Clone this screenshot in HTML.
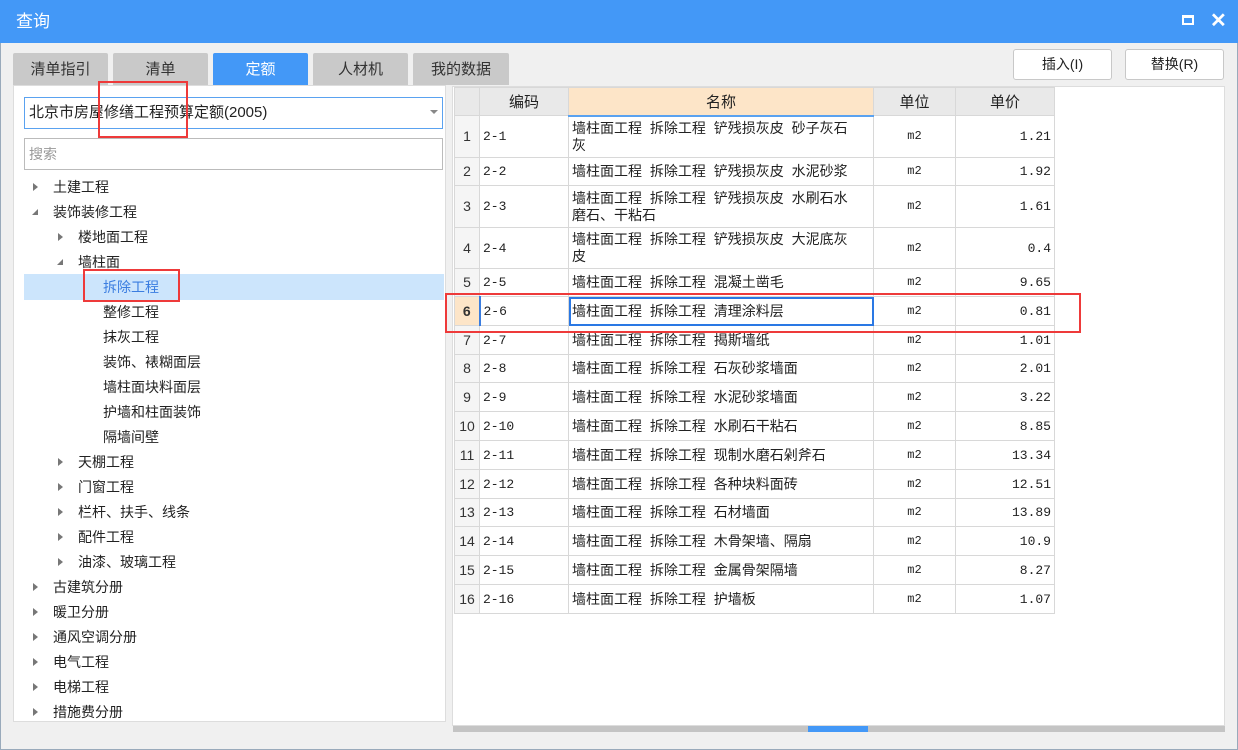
<!DOCTYPE html>
<html><head><meta charset="utf-8"><style>
*{margin:0;padding:0;box-sizing:border-box}
body{width:1238px;height:750px;overflow:hidden;background:#f0f0f0;font-family:"Liberation Sans","Noto Sans CJK SC",sans-serif;font-size:14px;color:#222;position:relative}
.abs{position:absolute}
.title{left:0;top:0;width:1238px;height:43px;background:#4398f7;color:#fff;font-size:17px;line-height:43px;padding-left:16px}
.win{left:0;top:43px;width:1238px;height:707px;border:1px solid #9ab;border-top:none}
.tab{top:53px;height:32px;width:95px;background:#c9c9c9;text-align:center;line-height:34px;font-size:15px;color:#333;border-radius:2px 2px 0 0}
.tab.on{background:#4398f7;color:#fff}
.btn{top:49px;height:31px;width:99px;background:#fff;border:1px solid #c8c8c8;border-radius:3px;text-align:center;line-height:29px;font-size:14px}
.left{left:13px;top:85px;width:433px;height:637px;background:#fff;border:1px solid #ddd}
.combo{left:24px;top:97px;width:419px;height:32px;border:1px solid #5aa2f0;background:#fff;line-height:30px;padding-left:4px;font-size:15px}
.search{left:24px;top:138px;width:419px;height:32px;border:1px solid #bbb;background:#fff;line-height:30px;padding-left:4px;color:#999;font-size:14px}
.ti{height:25px;line-height:25px;font-size:14px;position:absolute}
.arr{position:absolute;width:0;height:0;border-top:4px solid transparent;border-bottom:4px solid transparent;border-left:5px solid #777}
.arrd{position:absolute;width:0;height:0;border-left:6px solid transparent;border-bottom:6px solid #777}
.right{left:452px;top:86px;width:773px;height:640px;background:#fff;border:1px solid #ddd}
table{position:absolute;left:454px;top:87px;border-collapse:collapse;font-size:14px;background:#fff}
td{border:1px solid #d8d8d8;padding:0 3px;vertical-align:middle;line-height:17px}
th{border:1px solid #d8d8d8;background:#e9e9e9;font-weight:normal;font-size:15px;height:28px}
td.n{width:25px;background:#f5f5f5;text-align:center;font-family:"Liberation Sans Narrow","Liberation Sans",sans-serif;color:#333}
td.c{width:89px;font-family:"Liberation Mono",monospace;font-size:13px}
td.nm{width:305px;word-spacing:4px;white-space:nowrap}
td.u{width:82px;text-align:center;font-family:"Liberation Mono",monospace;font-size:12px}
td.p{width:99px;text-align:right;font-family:"Liberation Mono",monospace;font-size:13px}
.red{position:absolute;border:2px solid #ee3a3a}
</style></head><body>
<div class="abs title">查询</div>
<div class="abs" style="left:1182px;top:15px;width:12px;height:10px;border:2px solid #fff;border-top-width:3px"></div>
<div class="abs" style="left:1210px;top:8px;color:#fff;font-size:20px;font-weight:bold">✕</div>
<div class="abs win"></div>
<div class="abs tab" style="left:13px">清单指引</div>
<div class="abs tab" style="left:113px">清单</div>
<div class="abs tab on" style="left:213px">定额</div>
<div class="abs tab" style="left:313px">人材机</div>
<div class="abs tab" style="left:413px;width:96px">我的数据</div>
<div class="abs btn" style="left:1013px">插入(I)</div>
<div class="abs btn" style="left:1125px">替换(R)</div>
<div class="abs left"></div>
<div class="abs combo">北京市房屋修缮工程预算定额(2005)</div>
<div class="abs" style="left:430px;top:110px;border-left:4px solid transparent;border-right:4px solid transparent;border-top:4px solid #888"></div>
<div class="abs search">搜索</div>
<div class="abs" style="left:24px;top:274px;width:420px;height:26px;background:#cce5fc"></div>

<div class="arr" style="left:33px;top:183px"></div><div class="ti" style="left:53px;top:175px">土建工程</div>
<div class="arrd" style="left:32px;top:209px"></div><div class="ti" style="left:53px;top:200px">装饰装修工程</div>
<div class="arr" style="left:58px;top:233px"></div><div class="ti" style="left:78px;top:225px">楼地面工程</div>
<div class="arrd" style="left:57px;top:259px"></div><div class="ti" style="left:78px;top:250px">墙柱面</div>
<div class="ti" style="left:103px;top:275px;color:#3a7de0">拆除工程</div>
<div class="ti" style="left:103px;top:300px">整修工程</div>
<div class="ti" style="left:103px;top:325px">抹灰工程</div>
<div class="ti" style="left:103px;top:350px">装饰、裱糊面层</div>
<div class="ti" style="left:103px;top:375px">墙柱面块料面层</div>
<div class="ti" style="left:103px;top:400px">护墙和柱面装饰</div>
<div class="ti" style="left:103px;top:425px">隔墙间壁</div>
<div class="arr" style="left:58px;top:458px"></div><div class="ti" style="left:78px;top:450px">天棚工程</div>
<div class="arr" style="left:58px;top:483px"></div><div class="ti" style="left:78px;top:475px">门窗工程</div>
<div class="arr" style="left:58px;top:508px"></div><div class="ti" style="left:78px;top:500px">栏杆、扶手、线条</div>
<div class="arr" style="left:58px;top:533px"></div><div class="ti" style="left:78px;top:525px">配件工程</div>
<div class="arr" style="left:58px;top:558px"></div><div class="ti" style="left:78px;top:550px">油漆、玻璃工程</div>
<div class="arr" style="left:33px;top:583px"></div><div class="ti" style="left:53px;top:575px">古建筑分册</div>
<div class="arr" style="left:33px;top:608px"></div><div class="ti" style="left:53px;top:600px">暖卫分册</div>
<div class="arr" style="left:33px;top:633px"></div><div class="ti" style="left:53px;top:625px">通风空调分册</div>
<div class="arr" style="left:33px;top:658px"></div><div class="ti" style="left:53px;top:650px">电气工程</div>
<div class="arr" style="left:33px;top:683px"></div><div class="ti" style="left:53px;top:675px">电梯工程</div>
<div class="arr" style="left:33px;top:708px"></div><div class="ti" style="left:53px;top:700px">措施费分册</div>

<div class="abs right"></div>
<div class="abs" style="left:453px;top:726px;width:772px;height:6px;background:#c4c4c4"></div>
<div class="abs" style="left:808px;top:726px;width:60px;height:6px;background:#4398f7"></div>

<table>
<tr><th style="width:25px"></th><th>编码</th><th style="background:#fde5c8;border-bottom:2px solid #5aa2f0">名称</th><th>单位</th><th>单价</th></tr>
<tr style="height:42px"><td class="n">1</td><td class="c">2-1</td><td class="nm">墙柱面工程 拆除工程 铲残损灰皮 砂子灰石<br>灰</td><td class="u">m2</td><td class="p">1.21</td></tr>
<tr style="height:28px"><td class="n">2</td><td class="c">2-2</td><td class="nm">墙柱面工程 拆除工程 铲残损灰皮 水泥砂浆</td><td class="u">m2</td><td class="p">1.92</td></tr>
<tr style="height:42px"><td class="n">3</td><td class="c">2-3</td><td class="nm">墙柱面工程 拆除工程 铲残损灰皮 水刷石水<br>磨石、干粘石</td><td class="u">m2</td><td class="p">1.61</td></tr>
<tr style="height:41px"><td class="n">4</td><td class="c">2-4</td><td class="nm">墙柱面工程 拆除工程 铲残损灰皮 大泥底灰<br>皮</td><td class="u">m2</td><td class="p">0.4</td></tr>
<tr style="height:28px"><td class="n">5</td><td class="c">2-5</td><td class="nm">墙柱面工程 拆除工程 混凝土凿毛</td><td class="u">m2</td><td class="p">9.65</td></tr>
<tr style="height:29px"><td class="n" style="background:#fde5c8;font-weight:bold;border-right:2px solid #3a7de0">6</td><td class="c">2-6</td><td class="nm" style="outline:2px solid #2a78e4;outline-offset:-2px">墙柱面工程 拆除工程 清理涂料层</td><td class="u">m2</td><td class="p">0.81</td></tr>
<tr style="height:29px"><td class="n">7</td><td class="c">2-7</td><td class="nm">墙柱面工程 拆除工程 揭斯墙纸</td><td class="u">m2</td><td class="p">1.01</td></tr>
<tr style="height:28px"><td class="n">8</td><td class="c">2-8</td><td class="nm">墙柱面工程 拆除工程 石灰砂浆墙面</td><td class="u">m2</td><td class="p">2.01</td></tr>
<tr style="height:29px"><td class="n">9</td><td class="c">2-9</td><td class="nm">墙柱面工程 拆除工程 水泥砂浆墙面</td><td class="u">m2</td><td class="p">3.22</td></tr>
<tr style="height:29px"><td class="n">10</td><td class="c">2-10</td><td class="nm">墙柱面工程 拆除工程 水刷石干粘石</td><td class="u">m2</td><td class="p">8.85</td></tr>
<tr style="height:29px"><td class="n">11</td><td class="c">2-11</td><td class="nm">墙柱面工程 拆除工程 现制水磨石剁斧石</td><td class="u">m2</td><td class="p">13.34</td></tr>
<tr style="height:29px"><td class="n">12</td><td class="c">2-12</td><td class="nm">墙柱面工程 拆除工程 各种块料面砖</td><td class="u">m2</td><td class="p">12.51</td></tr>
<tr style="height:28px"><td class="n">13</td><td class="c">2-13</td><td class="nm">墙柱面工程 拆除工程 石材墙面</td><td class="u">m2</td><td class="p">13.89</td></tr>
<tr style="height:29px"><td class="n">14</td><td class="c">2-14</td><td class="nm">墙柱面工程 拆除工程 木骨架墙、隔扇</td><td class="u">m2</td><td class="p">10.9</td></tr>
<tr style="height:29px"><td class="n">15</td><td class="c">2-15</td><td class="nm">墙柱面工程 拆除工程 金属骨架隔墙</td><td class="u">m2</td><td class="p">8.27</td></tr>
<tr style="height:29px"><td class="n">16</td><td class="c">2-16</td><td class="nm">墙柱面工程 拆除工程 护墙板</td><td class="u">m2</td><td class="p">1.07</td></tr>
</table>

<div class="red" style="left:98px;top:81px;width:90px;height:57px"></div>
<div class="red" style="left:83px;top:269px;width:97px;height:33px"></div>
<div class="red" style="left:445px;top:293px;width:636px;height:40px"></div>
</body></html>
